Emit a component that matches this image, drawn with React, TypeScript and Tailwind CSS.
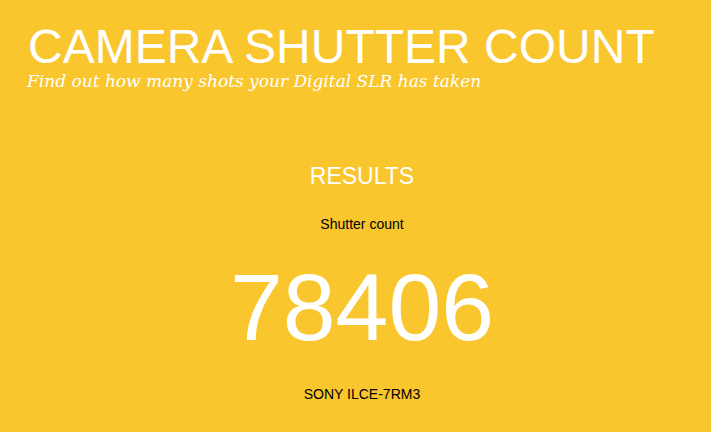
import React from 'react';

const result = {
  count: 78406,
  model: 'SONY ILCE-7RM3',
};

export default function App() {
  return (
    <div
      className="min-h-[432px] w-full bg-[#f9c62e] pl-[28px] pr-[15px] pt-[23px]"
      style={{ fontFamily: '"Liberation Sans", Arial, sans-serif' }}
    >
      {/* Header */}
      <h1 className="text-[48px] leading-none font-normal text-white">CAMERA SHUTTER COUNT</h1>
      <p className="mt-[2px] -ml-px font-['DejaVu_Serif',Georgia,serif] text-[17px] leading-none italic text-white">
        Find out how many shots your Digital SLR has taken
      </p>

      {/* Result block */}
      <div className="mt-[75px] flex flex-col items-center">
        <h2 className="text-[23px] leading-none text-white">RESULTS</h2>
        <p className="mt-[29px] text-[14px] leading-none text-black">Shutter count</p>
        <p className="mt-[29px] text-[95px] leading-none text-white">{result.count}</p>
        <p className="mt-[32px] text-[14px] leading-none text-black">{result.model}</p>
      </div>
    </div>
  );
}
